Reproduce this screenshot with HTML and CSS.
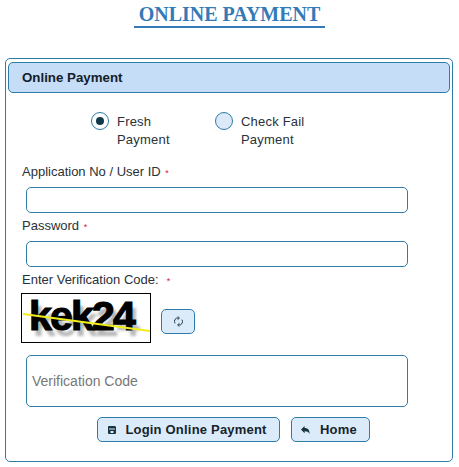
FILE: index.html
```html
<!DOCTYPE html>
<html lang="en">
<head>
<meta charset="utf-8">
<title>Online Payment</title>
<link rel="stylesheet" href="styles.css">
</head>
<body>
<div class="title-wrap"><h1 class="title">ONLINE PAYMENT</h1></div>
<section class="panel">
  <header class="panel-head">Online Payment</header>
  <div class="radios">
    <div class="radio-item">
      <span class="radio checked"><span class="dot"></span></span>
      <span class="radio-text">Fresh<br>Payment</span>
    </div>
    <div class="radio-item">
      <span class="radio"></span>
      <span class="radio-text">Check Fail<br>Payment</span>
    </div>
  </div>
  <label class="label">Application No / User ID <span class="req">*</span></label>
  <div class="field"></div>
  <label class="label">Password <span class="req">*</span></label>
  <div class="field"></div>
  <label class="label">Enter Verification Code: &nbsp;<span class="req">*</span></label>
  <div class="captcha-row">
    <div class="captcha">
      <span class="captcha-text">kek24</span>
      <svg class="captcha-line" viewBox="0 0 128 48" aria-hidden="true"><line x1="1" y1="20" x2="128" y2="37" stroke="#f2ee1a" stroke-width="2"/></svg>
    </div>
    <button class="btn btn-icon" type="button">
      <svg width="9" height="11" viewBox="0 0 10 12" fill="none" stroke="#17343f" stroke-width="1.1" aria-hidden="true"><path d="M1.200 8A3.700 3.700 0 0 1 5 2.200M8.800 4A3.700 3.700 0 0 1 5 9.800"/><path d="M4 .4 6 2.200 4 4M6 8 4 9.800 6 11.600"/></svg>
    </button>
  </div>
  <div class="field field-tall">Verification Code</div>
  <div class="actions">
    <button class="btn btn-main" type="button">
      <svg width="8" height="8" viewBox="0 0 8 8" aria-hidden="true"><path fill="#17343f" fill-rule="evenodd" d="M1 0h6l1 1v6a1 1 0 0 1-1 1H1a1 1 0 0 1-1-1V1a1 1 0 0 1 1-1ZM1 2.500v1h6v-1ZM2.500 5v2h3V5Z"/></svg>
      Login Online Payment
    </button>
    <button class="btn btn-home" type="button">
      <svg width="9" height="8" viewBox="0 0 9 8" aria-hidden="true"><path fill="#17343f" d="M3.600 0v2c3 0 5 1.500 5 6-.9-2.200-2.400-2.800-5-2.800v2L0 3.600Z"/></svg>
      Home
    </button>
  </div>
</section>
</body>
</html>
```
FILE: styles.css
```css
* { box-sizing: border-box; }
html, body { margin: 0; padding: 0; background: #fff; }
body {
  width: 459px;
  height: 467px;
  overflow: hidden;
  padding: 0 6px 0 5px;
  font-family: "Liberation Sans", Arial, sans-serif;
  font-size: 13px;
  color: #1c2b33;
}
.title-wrap { display: flex; justify-content: center; height: 58px; padding-top: 4px; }
.title {
  margin: 0;
  width: 191px;
  height: 24px;
  padding-left: 1px;
  text-align: center;
  font-family: "Liberation Serif", "Times New Roman", serif;
  font-size: 20px;
  line-height: 20px;
  font-weight: bold;
  color: #337ab7;
  border-bottom: 2px solid #337ab7;
}
.panel {
  height: 404px;
  border: 1px solid #2e7ca8;
  border-radius: 5px;
  padding: 3px 2px;
}
.panel-head {
  height: 31px;
  padding: 0 13px;
  line-height: 29px;
  font-weight: bold;
  font-size: 13.3px;
  color: #14202a;
  background: #c5ddf6;
  border: 1px solid #2e7ca8;
  border-radius: 5px;
}
.radios {
  display: flex;
  padding: 19px 0 0 83px;
  gap: 45px;
  height: 70px;
}
.radio-item { display: flex; width: 79px; gap: 8px; }
.radio-item + .radio-item { width: 110px; }
.radio {
  flex: none;
  width: 18px;
  height: 18px;
  border: 1px solid #2e7ca8;
  border-radius: 50%;
  background: #dbe9f8;
  display: flex;
  align-items: center;
  justify-content: center;
}
.radio.checked { background: #fff; }
.dot { width: 8px; height: 8px; border-radius: 50%; background: #0f3a4a; }
.radio-text { padding-top: 1px; line-height: 18px; font-size: 13px; letter-spacing: .2px; color: #2a3238; }
.label {
  display: block;
  height: 16px;
  margin-left: 14px;
  line-height: 18px;
  font-size: 13px;
  color: #2a3238;
}
.req { color: #d9143c; font-size: 9px; margin-left: 1px; }
.field {
  width: 382px;
  height: 26px;
  margin: 8px 0 4px 18px;
  border: 1px solid #2e7ca8;
  border-radius: 5px;
  background: #fff;
}
.captcha-row { display: flex; align-items: flex-end; margin: 6px 0 0 13px; gap: 10px; }
.captcha {
  position: relative;
  width: 130px;
  height: 50px;
  border: 1px solid #000;
  background: #fff;
  overflow: hidden;
}
.captcha-text {
  position: absolute;
  left: 7px;
  top: 0;
  font-family: "Liberation Sans", Arial, sans-serif;
  font-weight: bold;
  font-size: 41px;
  line-height: 44px;
  letter-spacing: -1.8px;
  color: #000;
  -webkit-text-stroke: 1.2px #000;
  text-shadow: 4px 6px 3px #b5b5b5;
}
.captcha-line { position: absolute; left: 0; top: 0; width: 128px; height: 48px; }
.btn {
  display: inline-flex;
  align-items: center;
  justify-content: center;
  height: 25px;
  padding: 0;
  border: 1px solid #2e7ca8;
  border-radius: 5px;
  background: #dcebfa;
  font-family: "Liberation Sans", Arial, sans-serif;
  font-size: 13px;
  font-weight: bold;
  letter-spacing: .2px;
  color: #17232b;
}
.btn-icon { width: 34px; margin-bottom: 9px; }
.field-tall {
  height: 52px;
  margin: 12px 0 0 18px;
  padding: 0 5px;
  line-height: 50px;
  font-size: 14px;
  color: #777;
}
.actions { display: flex; gap: 11px; margin: 10px 0 0 89px; }
.btn-main { width: 183px; gap: 9px; padding-right: 2px; }
.btn-home { width: 79px; gap: 10px; padding-right: 3px; }
```
